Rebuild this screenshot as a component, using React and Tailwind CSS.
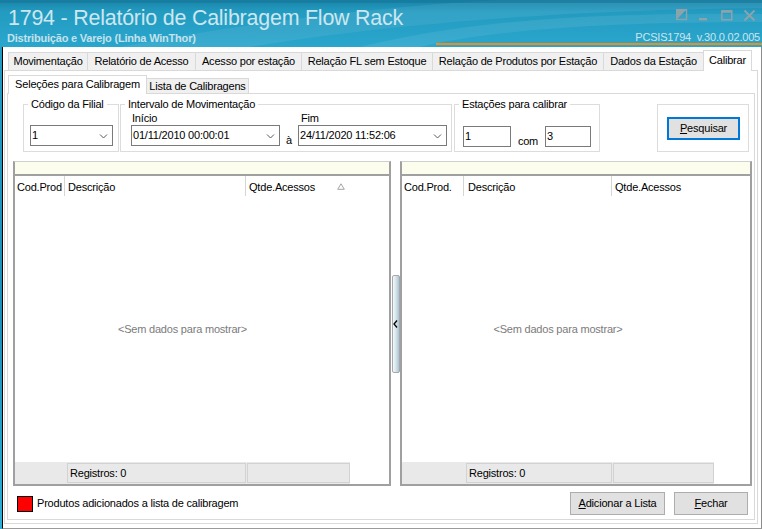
import React from "react";

const font = "font-['Liberation_Sans',Arial,sans-serif]";

function Chevron() {
  return (
    <svg width="9" height="6" viewBox="0 0 9 6" className="shrink-0">
      <path d="M1 1.5 L4.5 5 L8 1.5" fill="none" stroke="#5a5a5a" strokeWidth="1" />
    </svg>
  );
}

function Combo({ value, className }) {
  return (
    <div className={"flex items-center justify-between h-[21px] border border-[#7a7a7a] bg-white pl-[1px] pr-[4px] " + className}>
      <span>{value}</span>
      <Chevron />
    </div>
  );
}

function Field({ value, className }) {
  return (
    <div className={"flex items-center h-[21px] border border-[#7a7a7a] bg-white pl-[1px] " + className}>
      {value}
    </div>
  );
}

function TitleBar() {
  return (
    <div className="relative h-[47px] shrink-0 bg-[linear-gradient(180deg,#1a84a8_0%,#239bc1_25%,#2aa6cc_100%)] overflow-hidden">
      {/* decorative swooshes */}
      <svg width="762" height="47" viewBox="0 0 762 47" className="absolute inset-0">
        <path d="M120 47 C260 20 420 0 600 -4 L762 -4 L762 8 C560 10 380 25 250 47 Z" fill="#ffffff" opacity="0.07" />
        <path d="M360 47 C450 25 560 12 762 14 L762 22 C590 22 480 32 420 47 Z" fill="#ffffff" opacity="0.08" />
        <path d="M0 0 L762 0 L762 3 L0 3 Z" fill="#15769a" opacity="0.6" />
      </svg>
      <div className="absolute left-[8px] top-[6px] text-[21.4px] leading-[24px] text-[#cde7f0] whitespace-nowrap">
        1794 - Relatório de Calibragem Flow Rack
      </div>
      <div className="absolute left-[7px] top-[32px] text-[11px] leading-[13px] font-bold text-[#c4e2ec] whitespace-nowrap">
        Distribuição e Varejo (Linha WinThor)
      </div>
      <div className="absolute right-[2px] top-[31px] text-[11px] leading-[13px] text-[#cbe5ee] whitespace-pre">
        PCSIS1794  v.30.0.02.005
      </div>
      <div className="absolute left-[436px] right-0 top-[43px] h-[2px] bg-[#ef8c1c]" />
      <div className="absolute top-[9px] left-[676px] flex items-start gap-[0px]">
        <svg width="12" height="12" viewBox="0 0 12 12">
          <rect x="0.5" y="0.5" width="10" height="10" fill="none" stroke="#8da3ab" strokeWidth="1.4" />
          <path d="M0.5 0.5 L10.5 0.5 L0.5 10.5 Z" fill="#8da3ab" />
        </svg>
        <svg width="10" height="12" viewBox="0 0 10 12" className="ml-[11px]">
          <rect x="0" y="9" width="8" height="2.4" fill="#8da3ab" />
        </svg>
        <svg width="12" height="12" viewBox="0 0 12 12" className="ml-[12px] mt-[1px]">
          <rect x="0.8" y="0.8" width="10" height="9" fill="none" stroke="#8da3ab" strokeWidth="1.5" />
          <rect x="0.8" y="0.8" width="10" height="2" fill="#8da3ab" />
        </svg>
        <svg width="13" height="13" viewBox="0 0 13 13" className="ml-[10px]">
          <path d="M1.5 1.5 L11.5 11.5 M11.5 1.5 L1.5 11.5" stroke="#8da3ab" strokeWidth="1.8" />
        </svg>
      </div>
    </div>
  );
}

const outerTabs = [
  ["Movimentação", "w-[79px]"],
  ["Relatório de Acesso", "w-[108px]"],
  ["Acesso por estação", "w-[106px]"],
  ["Relação FL sem Estoque", "w-[131px]"],
  ["Relação de Produtos por Estação", "w-[171px]"],
  ["Dados da Estação", "w-[100px]"],
];

function SortTriangle() {
  return (
    <svg width="8" height="7" viewBox="0 0 8 7">
      <path d="M4 0.8 L7.3 6.3 L0.7 6.3 Z" fill="none" stroke="#9a9a9a" strokeWidth="0.9" />
    </svg>
  );
}

function Grid({ width, areaWidth, cols, foot }) {
  return (
    <div className={"flex flex-col h-[325px] border-x-2 border-b-2 border-[#a0a0a0] border-t border-t-[#cfcfcf] " + width}>
      <div className="h-[14px] shrink-0 bg-[#fdfdee] border-b-2 border-[#a0a0a0]" />
      <div className={"flex flex-col flex-1 " + areaWidth}>
        <div className="flex h-[20px] shrink-0 bg-white">
          {cols.map((c, i) => (
            <div
              key={i}
              className={"flex items-center pt-[2px] " + c.w + (i < cols.length - 1 ? " border-r border-[#d5d5d5]" : "")}
            >
              <span className={c.pl}>{c.t}</span>
              {c.sort && (
                <span className="ml-auto mr-[5px] mb-[2px]">
                  <SortTriangle />
                </span>
              )}
            </div>
          ))}
        </div>
        <div className="flex-1 flex items-center justify-center text-[#7b7b7b]">&lt;Sem dados para mostrar&gt;</div>
        <div className="flex h-[22px] shrink-0 bg-[#e9e9e9] py-[1px]">
          <div className={foot[0]} />
          <div className={"flex items-center pl-[2px] border border-[#d2d2d2] " + foot[1]}>Registros: 0</div>
          <div className={"ml-[1px] border border-[#d2d2d2] " + foot[2]} />
        </div>
      </div>
    </div>
  );
}

export default function App() {
  return (
    <div className={`w-[762px] h-[529px] overflow-hidden flex flex-col bg-[linear-gradient(180deg,#229dc4_0%,#1e8fb8_60%,#2ab0d8_100%)] ${font} text-[11px] leading-[13px] tracking-[-0.2px] text-black`}>
      <TitleBar />
      <div className="ml-[2px] w-[760px] flex-1 flex flex-col bg-white border-l border-l-black border-r border-r-[#8c8c8c] border-b border-b-[#9a9a9a]">
        {/* outer tab strip */}
        <div className="h-[23px] shrink-0 flex items-end pl-[5px]">
          {outerTabs.map(([t, w], i) => (
            <div
              key={t}
              className={
                "h-[18px] flex items-center justify-center whitespace-nowrap bg-[#f0f0f0] border-t border-l border-[#d9d9d9] " +
                w +
                (i === outerTabs.length - 1 ? " border-r-0" : "")
              }
            >
              {t}
            </div>
          ))}
          <div className="relative z-10 -mb-px h-[21px] w-[49px] flex items-center justify-center pb-[2px] bg-white border border-b-0 border-[#d9d9d9]">
            Calibrar
          </div>
        </div>

        {/* tab panel */}
        <div className="ml-[1px] w-[754px] h-[454px] shrink-0 flex flex-col border border-[#d9d9d9] bg-white">
          <div className="h-[22px] shrink-0 flex items-end pl-[3px]">
            <div className="relative z-10 -mb-px h-[19px] w-[139px] flex items-center justify-center pb-[2px] bg-white border border-b-0 border-[#d9d9d9]">
              Seleções para Calibragem
            </div>
            <div className="h-[15px] w-[102px] flex items-center justify-center bg-[#f0f0f0] border-t border-r border-[#d9d9d9]">
              Lista de Calibragens
            </div>
          </div>

          {/* inner panel */}
          <div className="ml-[2px] w-[748px] flex-1 mb-[3px] flex flex-col border border-[#d9d9d9]">
            {/* filters */}
            <div className="flex items-start pl-[15px] pt-[4px] shrink-0">
              <fieldset className="w-[96px] h-[54px] border border-[#dcdcdc]">
                <legend className="ml-[4px] px-[3px]">Código da Filial</legend>
                <Combo value="1" className="ml-[6px] mt-[14px] w-[83px]" />
              </fieldset>

              <fieldset className="ml-[1px] w-[332px] h-[54px] border border-[#dcdcdc]">
                <legend className="ml-[4px] px-[3px]">Intervalo de Movimentação</legend>
                <div className="flex items-end pl-[10px] mt-[1px]">
                  <div className="flex flex-col">
                    <span className="pl-[1px] h-[13px]">Início</span>
                    <Combo value="01/11/2010 00:00:01" className="w-[149px]" />
                  </div>
                  <span className="w-[18px] text-center mb-[-1px]">à</span>
                  <div className="flex flex-col">
                    <span className="pl-[3px] h-[13px]">Fim</span>
                    <Combo value="24/11/2020 11:52:06" className="w-[149px]" />
                  </div>
                </div>
              </fieldset>

              <fieldset className="ml-[2px] w-[146px] h-[54px] border border-[#dcdcdc]">
                <legend className="ml-[4px] px-[3px]">Estações para calibrar</legend>
                <div className="flex items-end pl-[8px] mt-[15px]">
                  <Field value="1" className="w-[48px]" />
                  <span className="w-[34px] text-center mb-[-1px]">com</span>
                  <Field value="3" className="w-[46px]" />
                </div>
              </fieldset>

              <fieldset className="ml-[57px] mt-[6px] w-[92px] h-[48px] border border-[#dcdcdc]">
                <button className="ml-[9px] mt-[12px] w-[73px] h-[23px] bg-[#e1e1e1] border-2 border-[#0078d7] tracking-[-0.2px]">
                  <span className="underline underline-offset-1">P</span>esquisar
                </button>
              </fieldset>
            </div>

            {/* grids */}
            <div className="flex items-stretch pl-[5px] mt-[9px] shrink-0">
              <Grid
                width="w-[378px]"
                areaWidth="w-[335px]"
                cols={[
                  { t: "Cod.Prod", w: "w-[50px]", pl: "pl-[2px]" },
                  { t: "Descrição", w: "w-[181px]", pl: "pl-[3px]" },
                  { t: "Qtde.Acessos", w: "flex-1", pl: "pl-[3px]", sort: true },
                ]}
                foot={["w-[52px]", "w-[179px]", "w-[103px]"]}
              />
              <div className="w-[9px] flex items-center justify-center">
                <div className="w-[8px] h-[98px] rounded-[2px] border border-[#a8a8a8] bg-[linear-gradient(90deg,#f4f8fa_0%,#d3e3eb_50%,#a9c4d2_100%)] flex items-center justify-center">
                  <svg width="5" height="8" viewBox="0 0 5 8">
                    <path d="M4 0.5 L1 4 L4 7.5" fill="none" stroke="#000" strokeWidth="1.3" />
                  </svg>
                </div>
              </div>
              <Grid
                width="w-[352px]"
                areaWidth="w-[312px]"
                cols={[
                  { t: "Cod.Prod.", w: "w-[62px]", pl: "pl-[2px]" },
                  { t: "Descrição", w: "w-[148px]", pl: "pl-[4px]" },
                  { t: "Qtde.Acessos", w: "flex-1", pl: "pl-[3px]" },
                ]}
                foot={["w-[64px]", "w-[146px]", "w-[101px]"]}
              />
            </div>

            {/* bottom row */}
            <div className="flex items-center mt-[6px] pl-[9px] pr-[6px] shrink-0">
              <div className="w-[16px] h-[16px] bg-[#ff0000] border border-black" />
              <span className="ml-[4px]">Produtos adicionados a lista de calibragem</span>
              <button className="ml-auto w-[95px] h-[23px] bg-[#e1e1e1] border border-[#adadad] tracking-[-0.2px]">
                <span className="underline underline-offset-1">A</span>dicionar a Lista
              </button>
              <button className="ml-[9px] w-[74px] h-[23px] bg-[#e1e1e1] border border-[#adadad] tracking-[-0.2px]">
                <span className="underline underline-offset-1">F</span>echar
              </button>
            </div>
          </div>
        </div>
      </div>
    </div>
  );
}
